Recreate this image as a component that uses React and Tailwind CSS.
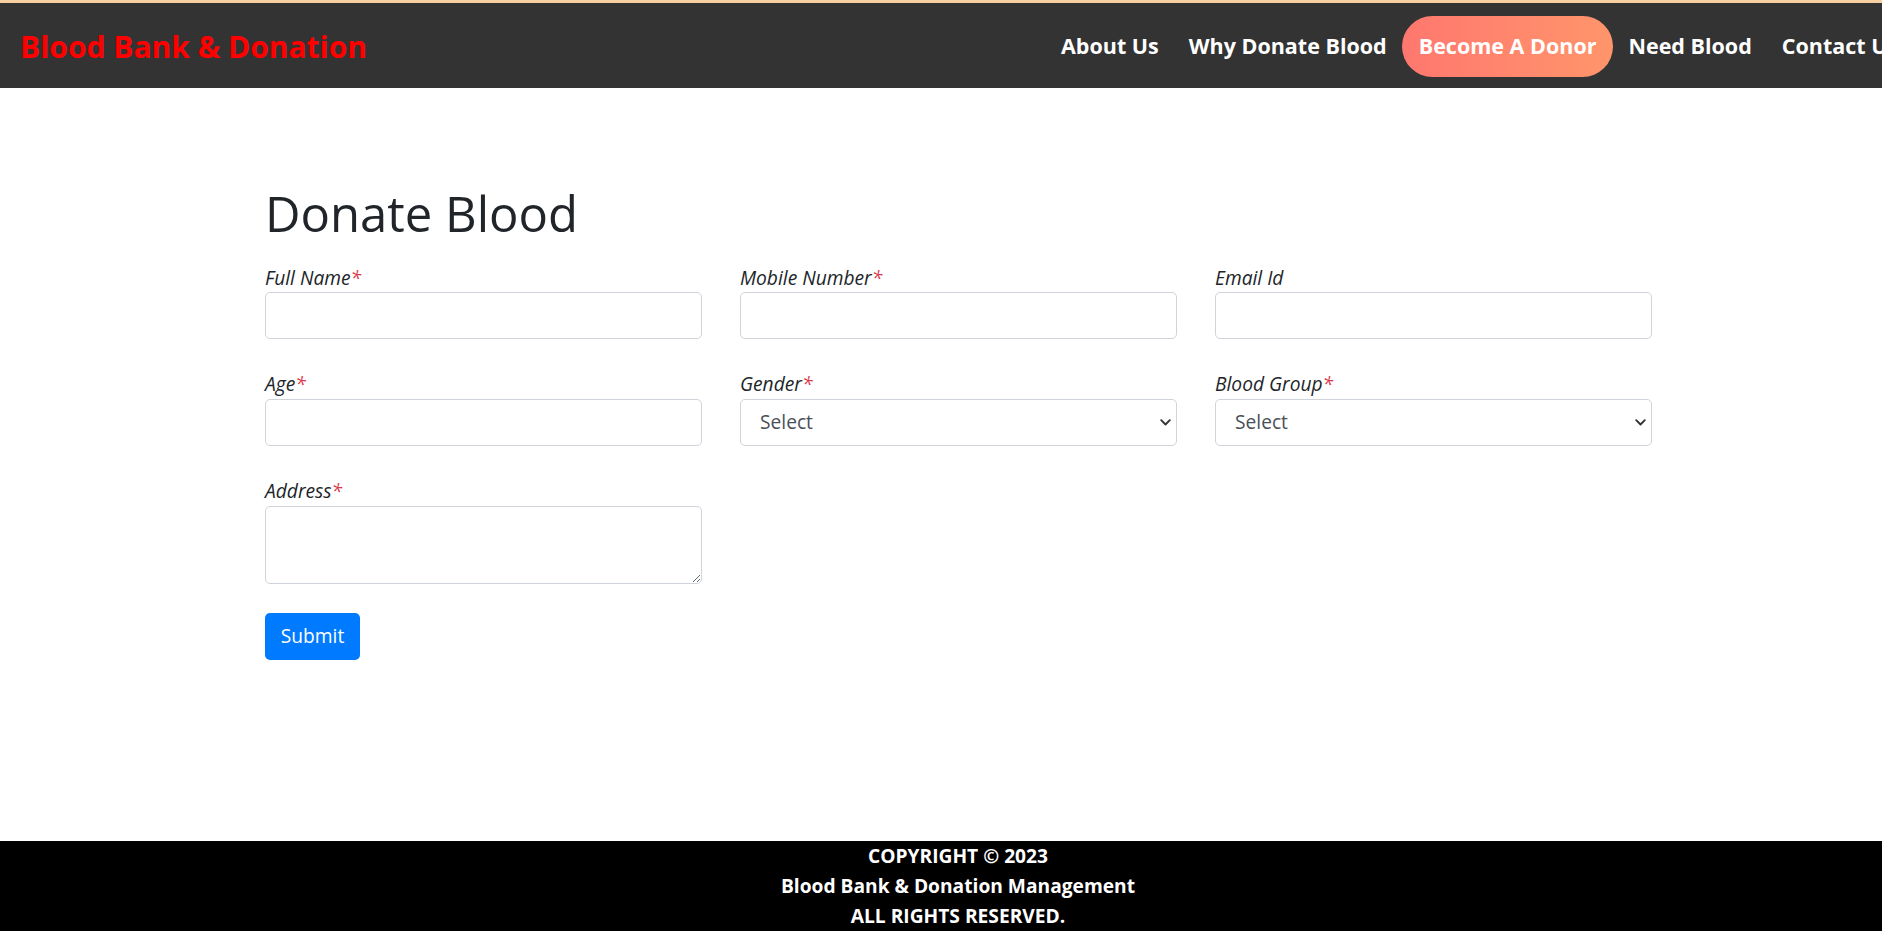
import { useState } from 'react'

const navLinks = ['About Us', 'Why Donate Blood', 'Become A Donor', 'Need Blood', 'Contact Us']

function Label({ text, required }) {
  return (
    <label className="block italic text-[19.2px] leading-[28.8px] text-[#212529]">
      {text}
      {required && <span className="text-[#dc3545]">*</span>}
    </label>
  )
}

function Field({ label, required, children }) {
  return (
    <div className="flex flex-col">
      <Label text={label} required={required} />
      {children}
    </div>
  )
}

const inputCls =
  'w-full h-[47px] border border-[#ced4da] rounded-[5px] bg-white px-[14px] text-[19.2px] text-[#495057] outline-none'

function SelectBox({ value, onChange }) {
  return (
    <div className="relative">
      <select
        value={value}
        onChange={(e) => onChange(e.target.value)}
        className={`${inputCls} appearance-none pl-[19px]`}
      >
        <option value="">Select</option>
      </select>
      <svg
        className="pointer-events-none absolute right-[6px] top-[20px]"
        width="11"
        height="7"
        viewBox="0 0 11 7"
        fill="none"
      >
        <path d="M1.2 1.2 L5.5 5.5 L9.8 1.2" stroke="#333" strokeWidth="1.9" strokeLinecap="round" strokeLinejoin="round" />
      </svg>
    </div>
  )
}

export default function App() {
  const [gender, setGender] = useState('')
  const [group, setGroup] = useState('')

  return (
    <div className="min-h-screen overflow-hidden flex flex-col bg-white font-['Open_Sans',sans-serif]">
      <header className="w-[1916px] h-[88px] shrink-0 flex items-center pl-[20px] bg-[#333333] border-t-[3px] border-[#f8cfa0]">
        <a className="w-[1026px] shrink-0 pt-[2px] text-[30px] leading-none font-bold text-[#ff0000]">
          Blood Bank &amp; Donation
        </a>
        <nav className="flex items-center shrink-0 mt-[2px]">
          {navLinks.map((link) =>
            link === 'Become A Donor' ? (
              <a
                key={link}
                className="h-[61px] flex items-center px-[17px] rounded-full bg-gradient-to-r from-[#ff776f] to-[#ff956b] text-white font-bold text-[21.5px] whitespace-nowrap"
              >
                {link}
              </a>
            ) : (
              <a key={link} className="px-[15px] text-white font-bold text-[21.5px] whitespace-nowrap">
                {link}
              </a>
            )
          )}
        </nav>
      </header>

      <main className="flex-1 w-[1916px] pt-[97px]">
        <div className="w-[1388px] ml-[265px]">
          <h1 className="text-[49px] leading-[57.6px] font-normal text-[#212529] mb-[21px]">Donate Blood</h1>

          <form className="grid grid-cols-3 gap-x-[38px] gap-y-[31px] w-[1387px]" onSubmit={(e) => e.preventDefault()}>
            <Field label="Full Name" required>
              <input type="text" className={inputCls} />
            </Field>
            <Field label="Mobile Number" required>
              <input type="text" className={inputCls} />
            </Field>
            <Field label="Email Id">
              <input type="email" className={inputCls} />
            </Field>

            <Field label="Age" required>
              <input type="text" className={inputCls} />
            </Field>
            <Field label="Gender" required>
              <SelectBox value={gender} onChange={setGender} />
            </Field>
            <Field label="Blood Group" required>
              <SelectBox value={group} onChange={setGroup} />
            </Field>

            <Field label="Address" required>
              <textarea className="w-full h-[78px] border border-[#ced4da] rounded-[5px] bg-white px-[14px] py-[7px] text-[19.2px] outline-none block" />
            </Field>
          </form>

          <button
            type="submit"
            className="mt-[29px] w-[95px] h-[47px] rounded-[5px] bg-[#007bff] text-white text-[19.2px] flex items-center justify-center"
          >
            Submit
          </button>
        </div>
      </main>

      <footer className="w-[1916px] shrink-0 bg-black text-white text-center font-bold text-[19.2px] leading-[30px]">
        <p>COPYRIGHT © 2023</p>
        <p>Blood Bank &amp; Donation Management</p>
        <p>ALL RIGHTS RESERVED.</p>
      </footer>
    </div>
  )
}
